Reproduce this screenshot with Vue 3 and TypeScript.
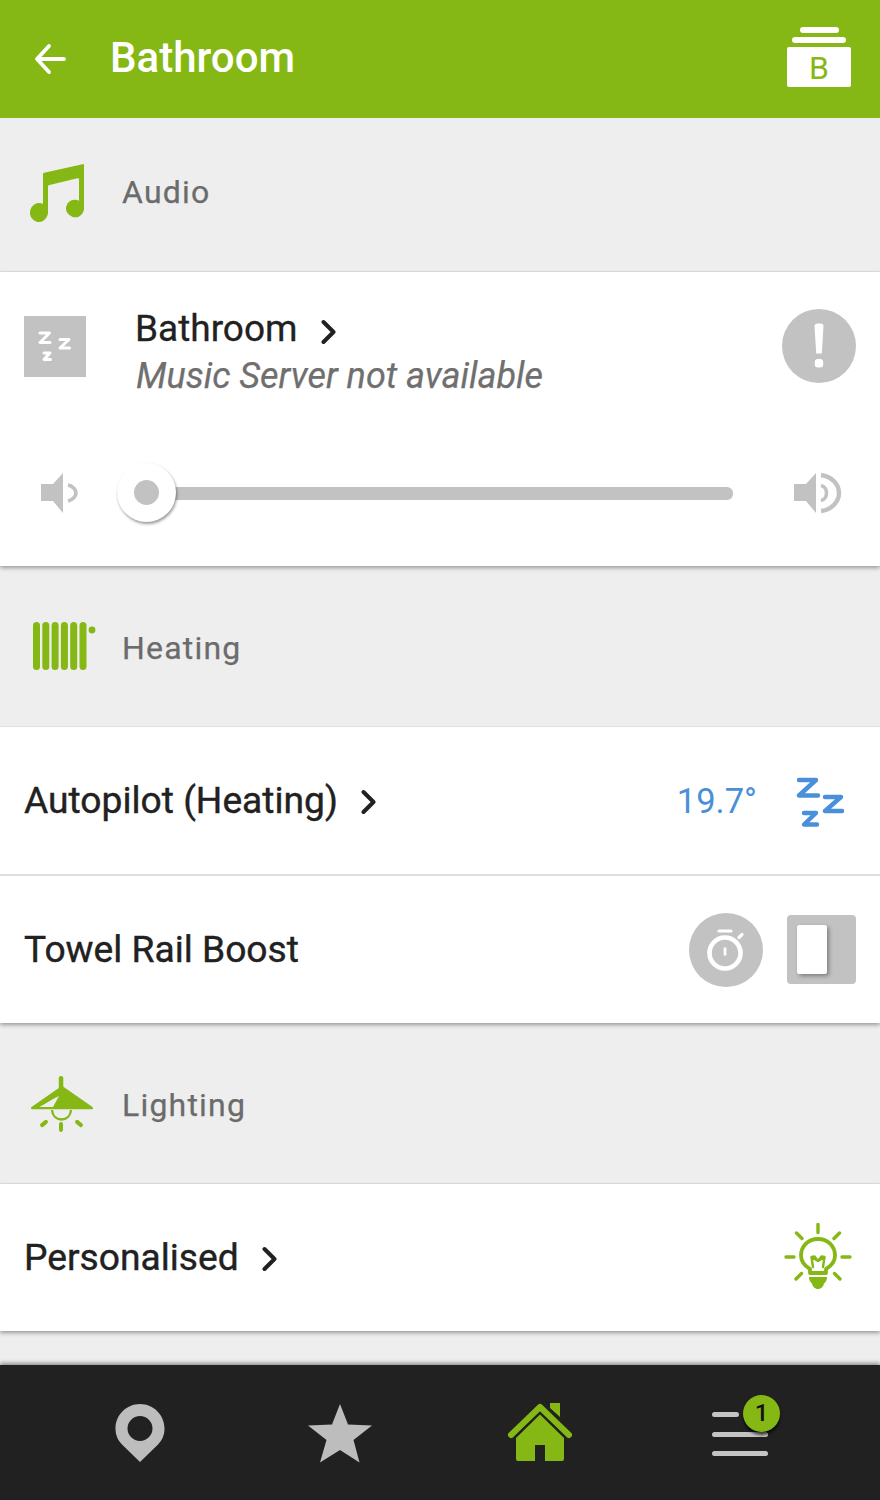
<script setup lang="ts">
</script>

<template>
  <div class="app">
    <header class="top">
      <svg class="back" width="36" height="34" viewBox="0 0 36 34"><path d="M31 17H5M16 4 4 17l12 13" fill="none" stroke="#fff" stroke-width="3.8" stroke-linecap="round" stroke-linejoin="round"/></svg>
      <h1 class="title">Bathroom</h1>
      <div class="badge-b">
        <span class="bl bl1"></span>
        <span class="bl bl2"></span>
        <span class="box">B</span>
      </div>
    </header>

    <main class="content">
      <section class="sec sec-audio">
        <svg class="sec-ic ic-note" width="55" height="58" viewBox="0 0 55 58"><g fill="#85b814"><path d="M13 10.500c0-1 .5-1.500 1.200-1.700L52.500.2c1-.3 1.500.2 1.500 1.200V45h-5V15.500c0-1-.6-1.500-1.500-1.200L19.500 21c-1 .2-1.500.8-1.500 1.800V49h-5Z"/><ellipse cx="45" cy="44.500" rx="9" ry="8.800" transform="rotate(15 45 44.500)"/><ellipse cx="9" cy="48.500" rx="9" ry="9.500" transform="rotate(15 9 48.500)"/></g></svg>
        <span class="sec-label">Audio</span>
      </section>

      <section class="card card-audio">
        <div class="player">
          <div class="zbox">
            <svg width="34" height="32" viewBox="0 0 34 32"><g fill="none" stroke="#fff" stroke-width="3" stroke-linecap="round" stroke-linejoin="round"><path d="M2 2h9.500L2 11.500h10"/><path d="M22 8.500h9l-9 8.500h9.500"/><path d="M6 22h6l-6 6.500h6.500"/></g></svg>
          </div>
          <div class="player-text">
            <div class="player-name">Bathroom
              <svg class="chev chev-p" width="16" height="26" viewBox="0 0 16 26"><path d="M2.500 3 12.500 13 2.500 23" fill="none" stroke="#212121" stroke-width="4" stroke-linecap="round" stroke-linejoin="round"/></svg>
            </div>
            <div class="player-sub">Music Server not available</div>
          </div>
          <div class="circle alert">
            <svg width="14" height="46" viewBox="0 0 14 46"><path fill="#fff" d="M2.500 3.500C2.500 1.500 3.500.5 5.500.5h3c2 0 3 1 3 3L9.800 30.500h-5.600Z"/><rect x="2.800" y="36" width="8.400" height="8.400" rx="3" fill="#fff"/></svg>
          </div>
        </div>
        <div class="volume">
          <svg width="40" height="42" viewBox="0 0 40 42"><path fill="#c2c2c2" d="M1 12h12L23 1v40L13 29H1Z"/><path fill="none" stroke="#c2c2c2" stroke-width="3.600" d="M28 13c5 1 8 5 8 8s-3 7-8 8"/></svg>
          <div class="slider">
            <div class="track"></div>
            <div class="knob"><span class="dot"></span></div>
          </div>
          <svg width="50" height="42" viewBox="0 0 50 42"><path fill="#c2c2c2" d="M1 12h12L23 1v40L13 29H1Z"/><path fill="none" stroke="#c2c2c2" stroke-width="3.600" d="M28 13.500c4 .8 5.500 4.500 5.500 7.500s-1.500 6.700-5.500 7.500"/><path fill="none" stroke="#c2c2c2" stroke-width="4.400" d="M28 3c11.500 1.500 18 10 18 18s-6.500 16.500-18 18"/></svg>
        </div>
      </section>

      <section class="sec sec-heat">
        <svg class="sec-ic ic-heat" width="64" height="50" viewBox="0 0 64 50"><g fill="#85b814"><rect x="1" y="1" width="7" height="48" rx="3.500"/><rect x="10.300" y="1" width="7" height="48" rx="3.500"/><rect x="19.600" y="1" width="7" height="48" rx="3.500"/><rect x="28.900" y="1" width="7" height="48" rx="3.500"/><rect x="38.200" y="1" width="7" height="48" rx="3.500"/><rect x="47.500" y="1" width="7" height="48" rx="3.500"/><circle cx="60" cy="9" r="3.400"/></g></svg>
        <span class="sec-label">Heating</span>
      </section>

      <section class="card row row-auto">
        <span class="row-title">Autopilot (Heating)</span>
        <svg class="chev chev-r" width="16" height="26" viewBox="0 0 16 26"><path d="M2.500 3 12.500 13 2.500 23" fill="none" stroke="#212121" stroke-width="4" stroke-linecap="round" stroke-linejoin="round"/></svg>
        <span class="temp">19.7°</span>
        <svg class="blue-z" width="48" height="50" viewBox="0 0 48 50"><g fill="none" stroke="#4a8fd9" stroke-width="4.400" stroke-linecap="round" stroke-linejoin="round"><path d="M3 3h17L3 18.500h19"/><path d="M29 20h16L29 34h17"/><path d="M8 36h12L8 47.500h13"/></g></svg>
      </section>

      <section class="card row row-boost">
        <span class="row-title">Towel Rail Boost</span>
        <div class="circle timer">
          <svg width="38" height="42" viewBox="0 0 38 42"><g fill="none" stroke="#fff" stroke-linecap="round"><circle cx="18" cy="24" r="15.500" stroke-width="4.600"/><path d="M12 2h12" stroke-width="3.200"/><path d="M32 8.500l3-3" stroke-width="3.200"/><path d="M18 18.500v8" stroke-width="2.800" stroke-linecap="butt"/></g></svg>
        </div>
        <div class="toggle"><span class="thumb"></span></div>
      </section>

      <section class="sec sec-light">
        <svg class="sec-ic ic-lamp" width="64" height="56" viewBox="0 0 64 56"><g fill="#85b814"><rect x="28.800" y="0" width="4.500" height="14" rx="2.200"/><path fill-rule="evenodd" d="M31 10.500c.6-.4 1.400-.4 2 0L62.500 31c1 .8.600 2.200-.6 2.200H2.100C.9 33.200.5 31.800 1.500 31ZM24 22.500 9.500 31h13.500L29 20Z"/><rect x="29" y="46" width="4" height="10" rx="2"/><rect x="12" y="43" width="4" height="9" rx="2" transform="rotate(50 14 47.500)"/><rect x="47" y="43" width="4" height="9" rx="2" transform="rotate(-50 49 47.500)"/></g><path d="M22 34c.5 6 4.500 9.500 9.500 9.500s9-3.500 9.500-9.500" fill="none" stroke="#85b814" stroke-width="2.400"/></svg>
        <span class="sec-label">Lighting</span>
      </section>

      <section class="card row row-pers">
        <span class="row-title">Personalised</span>
        <svg class="chev chev-r" width="16" height="26" viewBox="0 0 16 26"><path d="M2.500 3 12.500 13 2.500 23" fill="none" stroke="#212121" stroke-width="4" stroke-linecap="round" stroke-linejoin="round"/></svg>
        <svg class="bulb" width="68" height="70" viewBox="0 0 68 70"><g fill="none" stroke="#85b814" stroke-linecap="round" stroke-linejoin="round"><path d="M34 1.500v8M12.500 10l5.500 5.500M55.500 10 50 15.500M2 34h8M58 34h8M12 56l5.500-5.500M56 56l-5.500-5.500" stroke-width="3.400"/><path d="M26 50v-4c-5-3-9-7-9-13.500C17 23 24.500 16 34 16s17 7 17 16.500c0 6.500-4 10.500-9 13.500v4Z" stroke-width="3.800"/><path d="M29 44 27.500 34l6.500 4 6.500-4L39 44M27.500 34l3-.5 3.500 4.500 3.500-4.500 3 .5" stroke-width="2.400"/></g><path fill="#85b814" d="M25 54h18c0 3-1 5-3 6.500-.5 3-3 5.500-6 5.500s-5.500-2.500-6-5.500c-2-1.500-3-3.500-3-6.500Z"/></svg>
      </section>
    </main>

    <nav class="tabs">
      <svg class="tab-pin" width="50" height="60" viewBox="0 0 50 60"><path fill="#bdbdbd" fill-rule="evenodd" d="M25 1c13.500 0 24.500 11 24.500 24.500 0 7-2.500 12-7 16.500L25 59 7.500 42C3 37.500.5 32.500.5 25.500.5 12 11.500 1 25 1Zm0 12a12.500 12.500 0 1 0 0 25 12.500 12.500 0 0 0 0-25Z"/></svg>
      <svg class="tab-star" width="66" height="60" viewBox="0 0 66 60"><path fill="#bdbdbd" d="M33 1 41 21.500 65 22.500 46.500 37 52.500 59.500 33 47 13 59.500 19.500 37 1 22.500 25 21.500Z"/></svg>
      <svg class="tab-home" width="66" height="62" viewBox="0 0 66 62"><g fill="#85b814"><path d="M43 1h10v14l-10-9Z"/><path d="M33 12.500 57 36v21a2 2 0 0 1-2 2H38V43H28v16H11a2 2 0 0 1-2-2V36Z"/></g><path d="M4 33 33 5l29 28" fill="none" stroke="#85b814" stroke-width="6" stroke-linecap="round" stroke-linejoin="round"/></svg>
      <div class="tab-menu">
        <span class="ml ml1"></span>
        <span class="ml ml2"></span>
        <span class="ml ml3"></span>
        <span class="notif">1</span>
      </div>
    </nav>
  </div>
</template>

<style>
body { margin: 0; background: #eee; }
</style>

<style scoped>
.app {
  width: 880px;
  height: 1500px;
  display: flex;
  flex-direction: column;
  overflow: hidden;
  background: #eeeeee;
  font-family: Roboto, "Liberation Sans", sans-serif;
}
.top {
  height: 118px;
  flex: none;
  background: #85b814;
  display: flex;
  align-items: center;
  padding: 0 29px 0 33px;
  box-sizing: border-box;
}
.back { flex: none; margin-top: -1px; }
.title {
  margin: -3px 0 0 41px;
  flex: 1;
  font-size: 42px;
  font-weight: 500;
  color: #fff;
  line-height: 48px;
}
.badge-b {
  width: 64px;
  height: 60px;
  display: flex;
  flex-direction: column;
  align-items: center;
  margin-bottom: 4px;
}
.bl { display: block; background: #fff; border-radius: 3px; height: 6px; }
.bl1 { width: 39px; margin-bottom: 4px; }
.bl2 { width: 54px; margin-bottom: 4px; }
.box {
  width: 64px;
  height: 40px;
  background: #fff;
  border-radius: 2px;
  color: #85b814;
  font-size: 32px;
  line-height: 43px;
  text-align: center;
}
.content { flex: 1; min-height: 0; }
.sec {
  display: flex;
  align-items: center;
  background: #eeeeee;
  box-sizing: border-box;
  border-bottom: 1px solid #e0e0e0;
}
.sec-label {
  font-size: 32px;
  color: #6b6b6b;
  letter-spacing: 1.2px;
  line-height: 40px;
  -webkit-text-stroke: 0.25px #6b6b6b;
}
.sec-audio { height: 154px; padding-left: 30px; }
.sec-audio .sec-label { margin: 0 0 6px 37px; }
.ic-note { margin-bottom: 4px; }
.sec-heat { height: 161px; padding-left: 32px; }
.sec-heat .sec-label { margin: 3px 0 0 26px; }
.ic-heat { margin-bottom: 1px; }
.sec-light { height: 161px; padding-left: 30px; }
.sec-light .sec-label { margin: 4px 0 0 28px; }
.ic-lamp { margin-top: 2px; }
.sec-ic { flex: none; }
.card { background: #fff; }
.card-audio {
  height: 294px;
  box-shadow: 0 2px 4px rgba(0,0,0,.35);
  position: relative;
  display: flex;
  flex-direction: column;
}
.player {
  display: flex;
  align-items: flex-start;
  padding: 37px 24px 0 24px;
  height: 150px;
  box-sizing: border-box;
}
.zbox {
  width: 62px;
  height: 61px;
  margin-top: 7px;
  background: #c2c2c2;
  display: flex;
  align-items: center;
  justify-content: center;
  flex: none;
}
.player-text { flex: 1; margin-left: 49px; }
.player-name {
  font-size: 37px;
  color: #212121;
  line-height: 40px;
  display: flex;
  align-items: center;
  -webkit-text-stroke: 0.3px #212121;
}
.chev { flex: none; }
.chev-p { margin-left: 23px; margin-top: 6px; }
.player-sub {
  font-size: 36px;
  font-style: italic;
  color: #6f6f6f;
  line-height: 42px;
  margin-top: 6px;
  padding-left: 1px;
  -webkit-text-stroke: 0.25px #6f6f6f;
}
.circle {
  width: 74px;
  height: 74px;
  border-radius: 50%;
  background: #c2c2c2;
  display: flex;
  align-items: center;
  justify-content: center;
  flex: none;
}
.volume {
  display: flex;
  align-items: center;
  padding: 0 37px 0 40px;
  height: 142px;
}
.slider {
  position: relative;
  flex: 1;
  height: 60px;
  margin: 0 60px 0 37px;
  display: flex;
  align-items: center;
}
.track {
  width: 100%;
  height: 13px;
  background: #c2c2c2;
  border-radius: 6px;
}
.knob {
  position: absolute;
  left: 0;
  top: 0;
  width: 59px;
  height: 59px;
  border-radius: 50%;
  background: #fff;
  box-shadow: 1px 2px 3px rgba(0,0,0,.4);
  display: flex;
  align-items: center;
  justify-content: center;
}
.dot { width: 25px; height: 25px; border-radius: 50%; background: #c2c2c2; }
.row {
  display: flex;
  align-items: center;
  padding: 0 24px;
  box-sizing: border-box;
}
.row-title {
  font-size: 37.2px;
  color: #212121;
  line-height: 44px;
  margin-top: -2px;
  -webkit-text-stroke: 0.4px #212121;
}
.row-auto { height: 149px; border-bottom: 2px solid #e4e4e4; }
.chev-r { margin-left: 23px; margin-top: 3px; }
.temp {
  margin-left: auto;
  font-size: 34.500px;
  color: #4a8fd9;
  line-height: 44px;
}
.blue-z { margin-left: 39px; margin-right: 12px; margin-top: 2px; }
.row-boost {
  height: 147px;
  box-shadow: 0 2px 4px rgba(0,0,0,.35);
  position: relative;
}
.timer { margin-left: auto; }
.toggle {
  width: 69px;
  height: 69px;
  margin-left: 24px;
  border-radius: 4px;
  background: #c2c2c2;
  position: relative;
}
.thumb {
  position: absolute;
  left: 10px;
  top: 10px;
  width: 30px;
  height: 49px;
  background: #fff;
  border-radius: 2px;
  box-shadow: 2px 2px 4px rgba(0,0,0,.35);
}
.row-pers {
  height: 147px;
  box-shadow: 0 2px 4px rgba(0,0,0,.35);
  position: relative;
}
.bulb { margin-left: auto; margin-right: 4px; margin-top: 1px; }
.tabs {
  flex: none;
  height: 135px;
  background: #212121;
  position: relative;
  box-shadow: 0 -2px 4px rgba(0,0,0,.4);
  display: grid;
  grid-template-columns: repeat(4, 200px);
  padding: 0 40px;
  align-items: center;
  justify-items: center;
}
.tab-home { margin-top: 1px; }
.tab-menu {
  position: relative;
  width: 56px;
  height: 42px;
  margin-top: 1px;
}
.ml {
  position: absolute;
  left: 0;
  height: 5px;
  background: #c4c4c4;
  border-radius: 3px;
}
.ml1 { top: 0; width: 27px; }
.ml2 { top: 20px; width: 56px; }
.ml3 { top: 39px; width: 56px; }
.notif {
  position: absolute;
  left: 31px;
  top: -17px;
  width: 37px;
  height: 37px;
  border-radius: 50%;
  background: #85b814;
  color: #111;
  font-size: 24px;
  font-weight: 500;
  line-height: 37px;
  text-align: center;
  box-shadow: 0 3px 3px rgba(0,0,0,.7);
}
</style>
